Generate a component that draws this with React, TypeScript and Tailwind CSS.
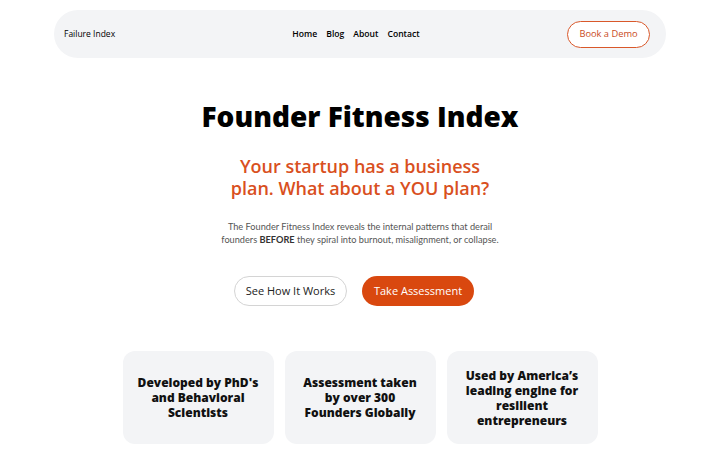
const open = { fontFamily: '"Open Sans", "Noto Sans", sans-serif' };
const lato = { fontFamily: 'Lato, "Open Sans", sans-serif' };

const cards = [
  ["Developed by PhD's", "and Behavioral", "Scientists"],
  ["Assessment taken", "by over 300", "Founders Globally"],
  ["Used by America\u2019s", "leading engine for", "resilient", "entrepreneurs"],
];

export default function App() {
  return (
    <div className="w-[720px] h-[450px] overflow-hidden bg-white text-black" style={open}>
      <div className="pt-[10px] px-[54px]">
        <nav className="h-[48px] rounded-full bg-[#f3f4f6] flex items-center pl-[10px] pr-[16px] leading-none">
          <div className="flex-1 flex items-center">
            <span className="text-[8.5px] font-medium">Failure Index</span>
          </div>
          <div className="flex gap-[9px] text-[8.6px] font-semibold ml-[2px] mr-[4px]">
            <span>Home</span>
            <span>Blog</span>
            <span>About</span>
            <span>Contact</span>
          </div>
          <div className="flex-1 flex justify-end">
            <button className="h-[27px] w-[83px] rounded-full border border-[#d9582a] bg-white text-[9.3px] text-[#c94a1c]">
              Book a Demo
            </button>
          </div>
        </nav>
      </div>

      <main className="flex flex-col items-center">
        <h1 className="mt-[38px] text-[28px] leading-[40px] font-extrabold">Founder Fitness Index</h1>
        <h2 className="mt-[19px] text-[18px] leading-[22px] font-semibold text-[#d9501e] text-center">
          Your startup has a business
          <br />
          plan. What about a YOU plan?
        </h2>
        <p className="mt-[21px] text-[9.2px] leading-[13px] text-[#555] text-center" style={lato}>
          The Founder Fitness Index reveals the internal patterns that derail
          <br />
          founders <b className="font-bold text-[#333]">BEFORE</b> they spiral into burnout, misalignment, or collapse.
        </p>
        <div className="mt-[30px] mr-[12px] flex gap-[15px]">
          <button className="h-[30px] w-[113px] rounded-full border border-[#d4d4d4] bg-white text-[11px] font-medium text-[#222]">
            See How It Works
          </button>
          <button className="h-[30px] w-[112px] rounded-full bg-[#d9480f] text-[11px] font-medium text-white">
            Take Assessment
          </button>
        </div>
        <div className="mt-[45px] flex gap-[11px]">
          {cards.map((lines, i) => (
            <div
              key={i}
              className="w-[151px] h-[93px] rounded-[12px] bg-[#f3f4f6] flex flex-col items-center justify-center text-[12px] leading-[15px] font-extrabold text-center text-[#111]"
            >
              {lines.map((l) => (
                <span key={l}>{l}</span>
              ))}
            </div>
          ))}
        </div>
      </main>
    </div>
  );
}
